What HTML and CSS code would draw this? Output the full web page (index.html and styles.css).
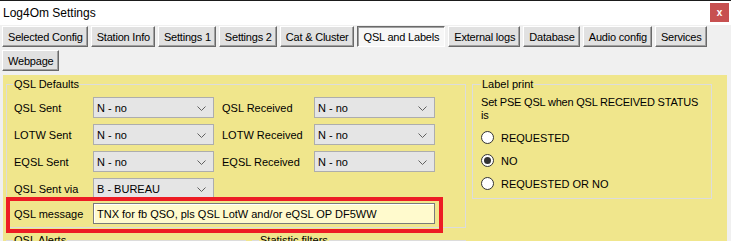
FILE: index.html
```html
<!DOCTYPE html>
<html>
<head>
<meta charset="utf-8">
<link rel="stylesheet" href="styles.css">
</head>
<body>
<div class="window">
  <div class="titlebar">
    <span class="title">Log4Om Settings</span>
    <span class="close">x</span>
  </div>
  <div class="tabs">
    <div class="tabrow">
      <span class="tab">Selected Config</span>
      <span class="tab">Station Info</span>
      <span class="tab">Settings 1</span>
      <span class="tab">Settings 2</span>
      <span class="tab">Cat &amp; Cluster</span>
      <span class="tab active">QSL and Labels</span>
      <span class="tab">External logs</span>
      <span class="tab">Database</span>
      <span class="tab">Audio config</span>
      <span class="tab">Services</span>
    </div>
    <div class="tabrow">
      <span class="tab">Webpage</span>
    </div>
  </div>
  <div class="panel">
    <div class="grouprow">
      <fieldset class="group defaults">
        <legend>QSL Defaults</legend>
        <div class="grid">
          <span class="lbl">QSL Sent</span>
          <span class="select">N - no<svg class="chev" width="9" height="5" viewBox="0 0 9 5"><polyline points="0.5,0.5 4.5,4.5 8.5,0.5" fill="none" stroke="#606060" stroke-width="1"/></svg></span>
          <span class="lbl lbl2">QSL Received</span>
          <span class="select">N - no<svg class="chev" width="9" height="5" viewBox="0 0 9 5"><polyline points="0.5,0.5 4.5,4.5 8.5,0.5" fill="none" stroke="#606060" stroke-width="1"/></svg></span>

          <span class="lbl">LOTW Sent</span>
          <span class="select">N - no<svg class="chev" width="9" height="5" viewBox="0 0 9 5"><polyline points="0.5,0.5 4.5,4.5 8.5,0.5" fill="none" stroke="#606060" stroke-width="1"/></svg></span>
          <span class="lbl lbl2">LOTW Received</span>
          <span class="select">N - no<svg class="chev" width="9" height="5" viewBox="0 0 9 5"><polyline points="0.5,0.5 4.5,4.5 8.5,0.5" fill="none" stroke="#606060" stroke-width="1"/></svg></span>

          <span class="lbl">EQSL Sent</span>
          <span class="select">N - no<svg class="chev" width="9" height="5" viewBox="0 0 9 5"><polyline points="0.5,0.5 4.5,4.5 8.5,0.5" fill="none" stroke="#606060" stroke-width="1"/></svg></span>
          <span class="lbl lbl2">EQSL Received</span>
          <span class="select">N - no<svg class="chev" width="9" height="5" viewBox="0 0 9 5"><polyline points="0.5,0.5 4.5,4.5 8.5,0.5" fill="none" stroke="#606060" stroke-width="1"/></svg></span>

          <span class="lbl">QSL Sent via</span>
          <span class="select">B - BUREAU<svg class="chev" width="9" height="5" viewBox="0 0 9 5"><polyline points="0.5,0.5 4.5,4.5 8.5,0.5" fill="none" stroke="#606060" stroke-width="1"/></svg></span>
        </div>
        <div class="msgrow">
          <span class="lbl">QSL message</span>
          <span class="input">TNX for fb QSO, pls QSL LotW and/or eQSL OP DF5WW</span>
        </div>
      </fieldset>
      <fieldset class="group labelprint">
        <legend>Label print</legend>
        <div class="desc">Set PSE QSL when QSL RECEIVED STATUS<br>is</div>
        <div class="radio first"><span class="circle"></span>REQUESTED</div>
        <div class="radio"><span class="circle checked"></span>NO</div>
        <div class="radio"><span class="circle"></span>REQUESTED OR NO</div>
      </fieldset>
    </div>
    <div class="grouprow">
      <fieldset class="group alerts"><legend>QSL Alerts</legend></fieldset>
      <fieldset class="group stats"><legend>Statistic filters</legend></fieldset>
    </div>
    <div class="highlight"></div>
  </div>
</div>
</body>
</html>
```
FILE: styles.css
```css
* { box-sizing: border-box; }
html, body { margin: 0; padding: 0; }
body {
  width: 731px;
  height: 241px;
  overflow: hidden;
  background: #f0f0f0;
  font-family: "Liberation Sans", Arial, sans-serif;
  font-size: 11px;
  color: #000;
}
.window {
  width: 731px;
  height: 241px;
  border-top: 1px solid #1b1b1b;
  display: flex;
  flex-direction: column;
}
.titlebar {
  height: 24px;
  flex: none;
  background: #fff;
  display: flex;
  align-items: center;
  justify-content: space-between;
  padding: 0 2px 0 3px;
}
.title { font-size: 12px; }
.close {
  width: 19px;
  height: 19px;
  background: #c75050;
  color: #fff;
  font-weight: bold;
  font-size: 10px;
  display: flex;
  align-items: center;
  justify-content: center;
  margin-bottom: 1px;
}
.tabs {
  flex: none;
  padding: 1px 0 0 2px;
  display: flex;
  flex-direction: column;
  gap: 3px;
}
.tabrow { display: flex; gap: 3px; }
.tab {
  height: 21px;
  padding: 0 4px 0 5px;
  display: flex;
  align-items: center;
  background: #e1e1e1;
  border-top: 1px solid #fff;
  border-left: 1px solid #fff;
  border-right: 1px solid #696969;
  border-bottom: 1px solid #696969;
  box-shadow: inset -1px -1px 0 #a0a0a0;
  letter-spacing: -0.2px;
}
.tab.active {
  background: #f7f7f7;
  border-top-color: #696969;
  border-left-color: #696969;
  border-right-color: #fff;
  border-bottom-color: #fff;
  box-shadow: inset 1px 1px 0 #a0a0a0;
  padding: 0 5px 0 6px;
}
.panel {
  position: relative;
  flex: 1;
  margin: 4px 4px 0 3px;
  background: #f0e68c;
  overflow: hidden;
  padding: 3px 0 0 3px;
}
.grouprow { display: flex; gap: 6px; align-items: flex-start; }
.group {
  margin: 0;
  border: 1px solid #dcdcdc;
  padding: 0 7px;
  min-width: 0;
}
.group legend {
  padding: 0 1px;
  margin-left: -1px;
  line-height: 13px;
}
.defaults { width: 460px; padding-top: 6px; padding-bottom: 3px; }
.grid {
  display: grid;
  grid-template-columns: 79px 121px 100px 121px;
  grid-auto-rows: 21px;
  row-gap: 6px;
  align-items: center;
}
.lbl2 { padding-left: 8px; }
.select {
  height: 21px;
  background: #e5e5e5;
  border: 1px solid #adadad;
  display: flex;
  align-items: center;
  justify-content: space-between;
  padding: 0 7px 0 3px;
}
.chev { display: block; margin-top: 1px; }
.msgrow {
  margin-top: 4px;
  display: flex;
  align-items: center;
  height: 21px;
}
.msgrow .lbl { width: 79px; flex: none; }
.input {
  width: 342px;
  height: 21px;
  background: #fffacd;
  border: 1px solid #7a7a7a;
  box-shadow: inset 1px 1px 0 #fff;
  display: flex;
  align-items: center;
  padding-left: 3px;
}
.labelprint { width: 240px; height: 121px; padding: 0 8px; }
.labelprint legend { margin-left: 0; }
.desc { line-height: 13px; margin-top: 5px; white-space: nowrap; letter-spacing: -0.2px; }
.radio {
  display: flex;
  align-items: center;
  height: 23px;
  gap: 7px;
}
.radio.first { margin-top: 4px; }
.circle {
  width: 13px;
  height: 13px;
  border-radius: 50%;
  border: 1px solid #333;
  background: #fff;
  display: flex;
  align-items: center;
  justify-content: center;
}
.circle.checked::after {
  content: "";
  width: 7px;
  height: 7px;
  border-radius: 50%;
  background: #333;
}
.alerts { width: 240px; height: 40px; margin-top: 6px; }
.stats { width: 214px; height: 40px; margin-top: 6px; }
.highlight {
  position: absolute;
  left: 3px;
  top: 122px;
  width: 437px;
  height: 36px;
  border: 4px solid #ed1c24;
}
```
